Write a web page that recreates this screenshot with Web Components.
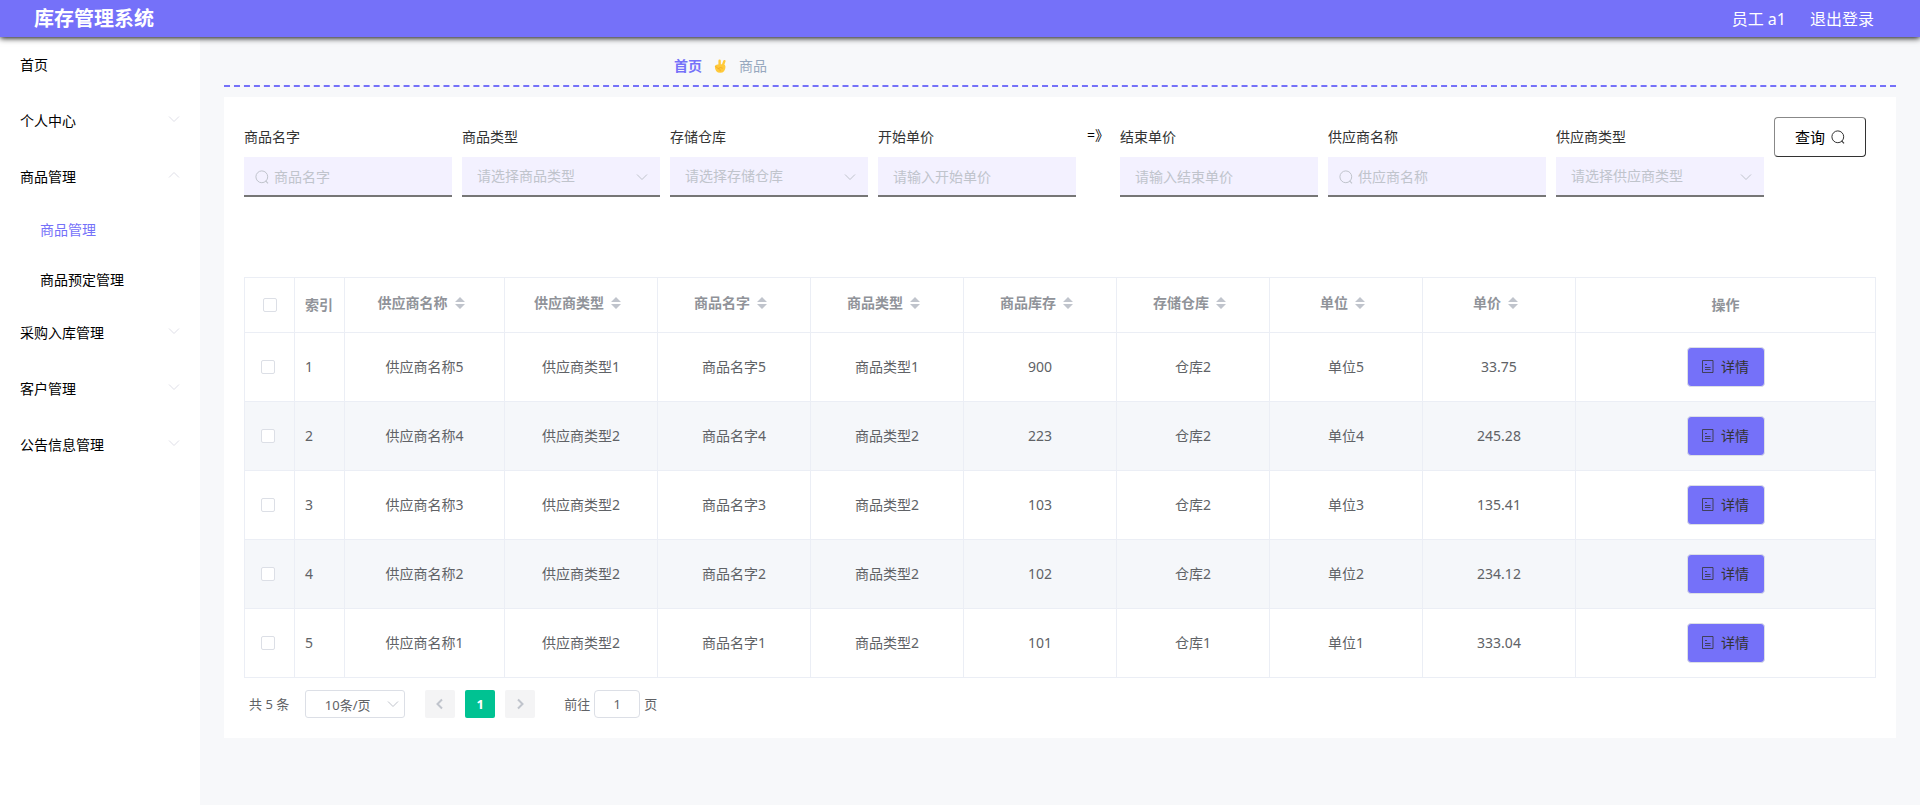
<!DOCTYPE html>
<html lang="zh-CN">
<head>
<meta charset="utf-8">
<title>库存管理系统</title>
<style>
  body {
    margin: 0;
    font-family: "Noto Sans", "Noto Sans CJK SC", sans-serif;
    font-size: 14px;
    line-height: 20px;
    color: #333;
    --main: #7571f9;
    --bg: #f7f8fa;
    --line: #ebeef5;
    --muted: #c0c4cc;
  }
</style>
</head>
<body>
<stock-app></stock-app>

<script>
const chevron = (d) => `<svg width="12" height="12" viewBox="0 0 12 12" fill="none" stroke="currentColor" aria-hidden="true"><path d="${d}"/></svg>`;
const DOWN = 'M1 3.5 6 8.5l5-5';
const UP = 'M1 8.5l5-5 5 5';
const SEARCH = `<svg width="14" height="14" viewBox="0 0 14 14" fill="none" stroke="currentColor" aria-hidden="true"><circle cx="6.8" cy="6.8" r="5.9"/><path d="M10.6 10.9 13 13.3" stroke-width="1.2"/></svg>`;

class BaseElement extends HTMLElement {
  constructor() {
    super();
    this.attachShadow({ mode: "open" });
  }
  connectedCallback() {
    this.shadowRoot.innerHTML = `<style>*{box-sizing:border-box}button,input,select{font:inherit;margin:0}a{text-decoration:none;color:inherit}svg{display:block;flex:none}${this.css()}</style>${this.html()}`;
  }
}

// top bar
class AppHeader extends BaseElement {
  css() {
    return `
      :host{display:flex;align-items:center;justify-content:space-between;height:37px;padding:0 46px 0 34px;box-sizing:border-box;background:var(--main);color:#fff;box-shadow:0 1px 6px #000;position:relative;z-index:2}
      h1{margin:0;font-size:20px;line-height:36px;font-weight:700}
      nav{display:flex;gap:24px;font-size:16px;line-height:34px}
    `;
  }
  html() {
    return `<h1><slot></slot></h1><nav><span><slot name="user"></slot></span><a href="#logout">退出登录</a></nav>`;
  }
}
customElements.define('app-header', AppHeader);

// one row of the side menu, its children go into the submenu
class MenuItem extends BaseElement {
  css() {
    return `
      :host{display:block;color:#000}
      a,button{display:flex;align-items:center;justify-content:space-between;width:100%;height:56px;padding:0 20px;border:0;background:none;color:inherit;text-align:left;cursor:pointer}
      svg{color:#dfdfe8;margin-bottom:4px}
      :host([sub]) a{height:50px;padding-left:40px}
      :host([active]){color:var(--main)}
    `;
  }
  html() {
    const text = this.getAttribute('text');
    if (this.hasAttribute('group')) {
      const open = this.hasAttribute('open');
      return `<button type="button" aria-expanded="${open}">${text}${chevron(open ? UP : DOWN)}</button><slot></slot>`;
    }
    return `<a href="#">${text}</a>`;
  }
}
customElements.define('menu-item', MenuItem);

class SideMenu extends BaseElement {
  css() {
    return `:host{display:block;background:#fff}`;
  }
  html() {
    return `<nav><slot></slot></nav>`;
  }
}
customElements.define('side-menu', SideMenu);

class BreadCrumb extends BaseElement {
  css() {
    return `
      :host{display:block;padding:0 24px}
      nav{display:flex;align-items:center;gap:12px;height:50px;padding:10px 0 0 450px;box-sizing:border-box;border-bottom:2px dashed var(--main);color:#97a8be}
      a{color:var(--main);font-weight:700}
    `;
  }
  html() {
    return `
      <nav>
        <a href="#">首页</a>
        <svg width="13" height="14" viewBox="0 0 13 14" aria-hidden="true">
          <path d="M5.6 7V1.7M8.6 7l1.8-4.8" stroke="#ffca3a" stroke-width="2.4" stroke-linecap="round"/>
          <path d="M.8 7.4Q1.4 5.6 3.6 5.4L9 5.2q2.6.4 2.5 2.6Q11.3 13.8 6.200 13.800T.8 7.400z" fill="#ffca3a"/>
          <path d="M1.600 7.400 4.400 9.800M4.200 9.400Q6.400 7.600 8.400 9M5.400 9.800q1 .8.8 2" fill="none" stroke="#f3a623" stroke-width=".8" stroke-linecap="round"/>
        </svg>
        <span><slot></slot></span>
      </nav>`;
  }
}
customElements.define('bread-crumb', BreadCrumb);

// labelled field of the search form: type = search | select | text
class FilterField extends BaseElement {
  css() {
    return `
      :host{display:block;min-width:0}
      label{display:block;line-height:40px}
      .box{display:flex;align-items:center;position:relative}
      input,select{width:100%;height:40px;padding:0 15px;border:0;border-bottom:2px solid #767676;border-radius:0;background:#f3f1ff;color:var(--muted);appearance:none;outline:0}
      input::placeholder{color:var(--muted);opacity:1}
      svg{position:absolute;color:var(--muted)}
      .search input{padding-left:30px}
      .search svg{left:11px}
      .select svg{right:12px}
    `;
  }
  html() {
    const type = this.getAttribute('type');
    const hint = this.getAttribute('hint');
    const control = type === 'select'
      ? `<select id="f"><option>${hint}</option></select>${chevron(DOWN)}`
      : `<input id="f" type="text" placeholder="${hint}">${type === 'search' ? SEARCH : ''}`;
    return `<label for="f"><slot></slot></label><div class="box ${type}">${control}</div>`;
  }
}
customElements.define('filter-field', FilterField);

class SearchForm extends BaseElement {
  css() {
    return `
      form{display:flex;align-items:flex-start;gap:10px;padding-right:10px}
      .w{flex:1 1 208px}
      .n{flex:1 1 198px}
      .x{flex:1 1 218px}
      .to{width:24px;line-height:36px;color:#000;white-space:nowrap;text-align:center}
      button{display:flex;align-items:center;justify-content:center;gap:6px;flex:none;width:92px;height:40px;border:1px solid;border-color:#888 #333 #333 #888;border-radius:4px;background:#fff;color:#000;font-size:15px;padding:0}
      svg{color:#333}
    `;
  }
  html() {
    return `
      <form>
        <filter-field class="w" type="search" hint="商品名字">商品名字</filter-field>
        <filter-field class="n" type="select" hint="请选择商品类型">商品类型</filter-field>
        <filter-field class="n" type="select" hint="请选择存储仓库">存储仓库</filter-field>
        <filter-field class="n" type="text" hint="请输入开始单价">开始单价</filter-field>
        <span class="to">=》</span>
        <filter-field class="n" type="text" hint="请输入结束单价">结束单价</filter-field>
        <filter-field class="x" type="search" hint="供应商名称">供应商名称</filter-field>
        <filter-field class="w" type="select" hint="请选择供应商类型">供应商类型</filter-field>
        <button type="button">查询 ${SEARCH}</button>
      </form>`;
  }
}
customElements.define('search-form', SearchForm);

const columns = ['供应商名称', '供应商类型', '商品名字', '商品类型', '商品库存', '存储仓库', '单位', '单价'];
const goods = [
  ['供应商名称5', '供应商类型1', '商品名字5', '商品类型1', '900', '仓库2', '单位5', '33.75'],
  ['供应商名称4', '供应商类型2', '商品名字4', '商品类型2', '223', '仓库2', '单位4', '245.28'],
  ['供应商名称3', '供应商类型2', '商品名字3', '商品类型2', '103', '仓库2', '单位3', '135.41'],
  ['供应商名称2', '供应商类型2', '商品名字2', '商品类型2', '102', '仓库2', '单位2', '234.12'],
  ['供应商名称1', '供应商类型2', '商品名字1', '商品类型2', '101', '仓库1', '单位1', '333.04'],
];

class GoodsTable extends BaseElement {
  css() {
    return `
      :host{display:block}
      table{width:100%;table-layout:fixed;border-collapse:separate;border-spacing:0;border-top:1px solid var(--line);border-left:1px solid var(--line);color:#606266}
      th,td{padding:0;text-align:center;border-right:1px solid var(--line);border-bottom:1px solid var(--line)}
      th{height:55px;color:#909399;font-weight:700}
      td{height:69px}
      tbody tr:nth-child(even){background:#f5f7fa}
      .pick{width:50px}
      .idx{width:50px;text-align:left;padding-left:10px}
      .first{width:160px}
      .ops{width:300px}
      td.pick{text-align:left;padding-left:16px}
      input{appearance:none;display:block;width:14px;height:14px;border:1px solid #dcdfe6;border-radius:2px;background:#fff}
      th input{margin:0 auto}
      .sort{display:flex;align-items:center;justify-content:center;padding-bottom:4px}
      .sort button{display:flex;width:24px;height:14px;padding:0;border:0;background:none;justify-content:center;align-items:center;color:var(--muted)}
      .act{display:flex;align-items:center;justify-content:center;gap:7px;width:78px;height:40px;margin:0 auto;padding:0;border:1px solid #dcdfe6;border-radius:4px;background:var(--main);color:#333}
    `;
  }
  html() {
    const caret = `<svg width="10" height="12" viewBox="0 0 10 12" fill="currentColor" aria-hidden="true"><path d="M0 5 5 0l5 5zM0 7h10l-5 5z"/></svg>`;
    const doc = `<svg width="12" height="14" viewBox="0 0 12 14" fill="none" stroke="currentColor" stroke-width=".8" aria-hidden="true"><path d="M.5 .5h10.500v12H.5zM3 4.500h2M3 7.500h5.500M3 9.500h5.500"/></svg>`;
    const heads = columns.map((c, i) => `<th class="${i ? '' : 'first'}"><div class="sort">${c}<button type="button" aria-label="排序">${caret}</button></div></th>`).join('');
    const rows = goods.map((r, i) => `
      <tr>
        <td class="pick"><input type="checkbox" aria-label="选择"></td>
        <td class="idx">${i + 1}</td>
        ${r.map((v) => `<td>${v}</td>`).join('')}
        <td><button class="act" type="button">${doc}详情</button></td>
      </tr>`).join('');
    return `
      <table>
        <thead><tr><th class="pick"><input type="checkbox" aria-label="全选"></th><th class="idx">索引</th>${heads}<th class="ops">操作</th></tr></thead>
        <tbody>${rows}</tbody>
      </table>`;
  }
}
customElements.define('goods-table', GoodsTable);

class PagerBar extends BaseElement {
  css() {
    return `
      :host{display:flex;align-items:center;padding-left:5px;font-size:13px;line-height:28px;color:#606266}
      .size{position:relative;display:flex;align-items:center;margin:0 20px 0 16px}
      .size svg{position:absolute;right:6px;color:var(--muted)}
      select{appearance:none;width:100px;height:28px;padding:0 25px 0 10px;border:1px solid #dcdfe6;border-radius:3px;background:#fff;color:#606266;text-align-last:center}
      .pages{display:flex;gap:10px;margin-right:29px}
      .pages button{display:flex;align-items:center;justify-content:center;width:30px;height:28px;padding:0;border:0;border-radius:2px;background:#f4f4f5;color:var(--muted)}
      .pages .on{background:#00c292;color:#fff;font-weight:700}
      .pages svg{stroke-width:2}
      label{display:flex;align-items:center;gap:4px}
      input{width:46px;height:28px;padding:0;border:1px solid #dcdfe6;border-radius:4px;background:#fff;color:#606266;text-align:center}
    `;
  }
  html() {
    return `
      <span>共 5 条</span>
      <div class="size"><select aria-label="每页条数"><option>10条/页</option></select>${chevron(DOWN)}</div>
      <div class="pages">
        <button type="button" aria-label="上一页">${chevron('M8 1.5 3.5 6 8 10.5')}</button>
        <button type="button" class="on">1</button>
        <button type="button" aria-label="下一页">${chevron('M4 1.5 8.5 6 4 10.5')}</button>
      </div>
      <label>前往<input type="text" value="1">页</label>`;
  }
}
customElements.define('pager-bar', PagerBar);

class StockApp extends BaseElement {
  css() {
    return `
      :host{display:flex;flex-direction:column;min-height:100vh;background:var(--bg)}
      .body{display:flex;flex:1}
      side-menu{flex:none;width:200px}
      main{flex:1;min-width:0}
      .card{margin:10px 24px 24px;padding:20px;background:#fff}
      goods-table{margin:80px 0 12px}
    `;
  }
  html() {
    return `
      <app-header>库存管理系统<span slot="user">员工 a1</span></app-header>
      <div class="body">
        <side-menu>
          <menu-item text="首页"></menu-item>
          <menu-item text="个人中心" group></menu-item>
          <menu-item text="商品管理" group open>
            <menu-item text="商品管理" sub active></menu-item>
            <menu-item text="商品预定管理" sub></menu-item>
          </menu-item>
          <menu-item text="采购入库管理" group></menu-item>
          <menu-item text="客户管理" group></menu-item>
          <menu-item text="公告信息管理" group></menu-item>
        </side-menu>
        <main>
          <bread-crumb>商品</bread-crumb>
          <section class="card">
            <search-form></search-form>
            <goods-table></goods-table>
            <pager-bar></pager-bar>
          </section>
        </main>
      </div>`;
  }
}
customElements.define('stock-app', StockApp);
</script>
</body>
</html>
